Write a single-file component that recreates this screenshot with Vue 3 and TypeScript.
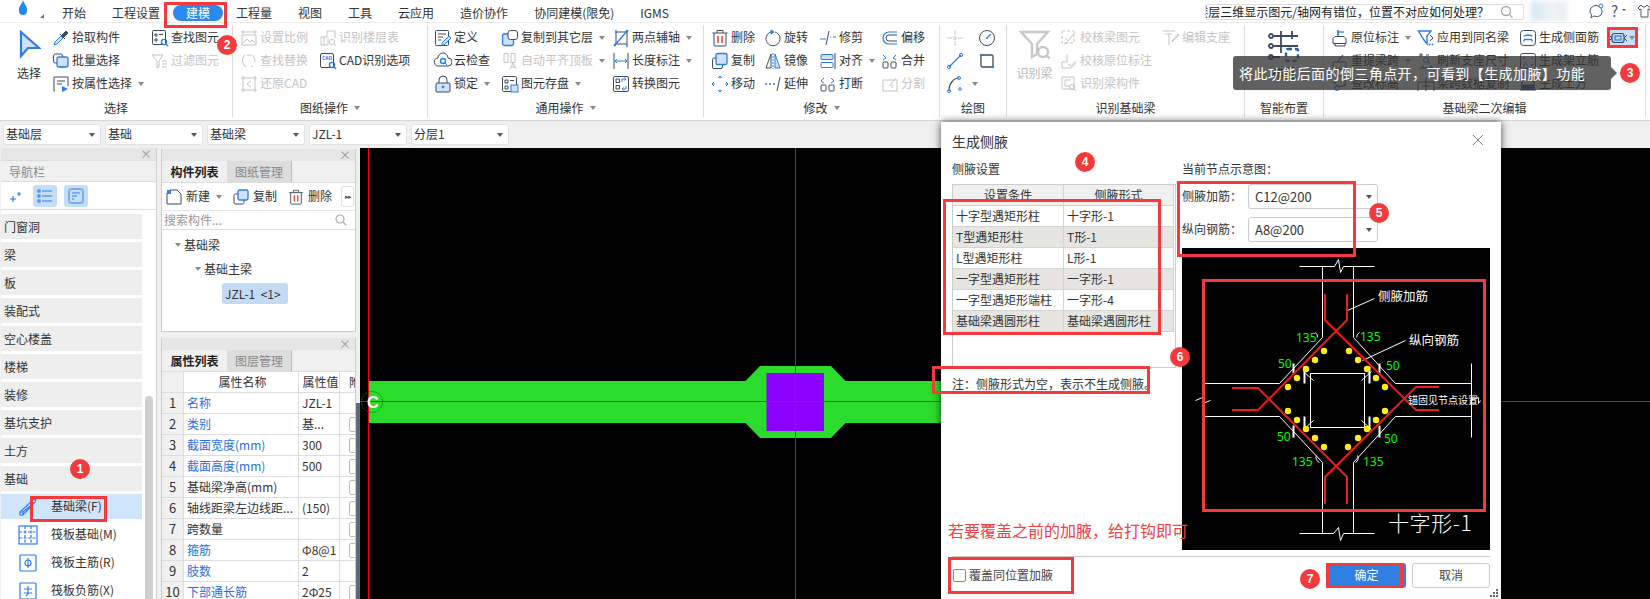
<script setup lang="ts">
const B = '#2b7de9'
const L = '#cfe2fb'
const mag = `<circle cx="13" cy="13" r="2.6" stroke="${B}" stroke-width="1.4"/><path d="M15 15l2 2" stroke="${B}" stroke-width="1.4"/>`
const icons: Record<string, string> = {
  pick: `<path d="M2 16l1-3 6-6 2 2-6 6z" fill="${L}" stroke="${B}"/><path d="M8 5l5 5M10 6l4-4 2 2-4 4z" fill="#3d4a5c"/>`,
  batch: `<rect x="1.5" y="2" width="9" height="9" rx="2"/><rect x="5" y="5" width="11" height="10" rx="2" fill="${L}" stroke="${B}" stroke-width="1.3"/><path d="M8 14l2 2 2-2" stroke="${B}"/>`,
  attr: `<path d="M3 16H2V2h14v9"/><path d="M5 6h8M5 9h5" /><path d="M10 11l6 3-6 3z" fill="${B}" stroke="none"/>`,
  find: `<rect x="1.5" y="1.5" width="13" height="14" rx="1"/><path d="M4 5h2v2H4zM8 5.5h4M4 10h2v2H4z"/>${mag}`,
  filter: `<path d="M1 3h11L8 9v6l-2 1V9z"/><path d="M11 9h5M11 12h5M11 15h5"/>`,
  scale: `<path d="M3 1v4M1 3h16M15 1v4M2 6h14v10H2z"/><path d="M3 14l4-4 3 3 2-2 3 3"/>`,
  replace: `<path d="M5 3a7 7 0 0 0-1 10l2 2"/><path d="M12 3a7 7 0 0 1 3 7"/><path d="M7 3h4M11 15l2-1"/>`,
  cadback: `<path d="M3 1v16M15 1v16M1 3h16M1 15h16"/><path d="M11 6L7 9l4 3" />`,
  floor: `<path d="M2 8h6V2h8v7M2 8v8h7V9M5 8v8"/><circle cx="13" cy="13" r="2.6"/><path d="M15 15l2 2"/>`,
  cad: `<rect x="1.5" y="1.5" width="13" height="14" rx="1.5"/><text x="3" y="8" font-size="5" font-weight="700" fill="${B}" stroke="none">CAD</text>${mag}`,
  define: `<rect x="1.5" y="1.5" width="13" height="15" rx="1"/><path d="M4 5h8M4 8h5M4 11h3"/><path d="M8 14l7-7 2 2-7 7H8z" fill="${L}" stroke="${B}"/>`,
  cloud: `<path d="M5 14a4 4 0 0 1-1-8 5 5 0 0 1 10 0 4 4 0 0 1 0 8z"/><circle cx="9" cy="9" r="2.5" stroke="${B}" stroke-width="1.4"/><path d="M11 11l2 2" stroke="${B}"/>`,
  lock: `<rect x="2" y="8" width="14" height="9" rx="1" fill="${L}"/><path d="M5 8V5a4 4 0 0 1 8 0v3"/><circle cx="9" cy="12" r="1" fill="${B}" stroke="${B}"/>`,
  copyto: `<rect x="1.5" y="5" width="11" height="11.5" rx="2" fill="${L}" stroke="${B}" stroke-width="1.3"/><rect x="7" y="1.5" width="9.5" height="9" rx="2.5" fill="#fff"/>`,
  align: `<path d="M3 1.5v9h4v-9zM10 1.5v9h4v-9z"/><path d="M9 17l3-6 3 6M10 15h4"/>`,
  save: `<rect x="1.5" y="1.5" width="14" height="15" rx="1"/><path d="M4 5h3v3H4zM9 5.5h4M4 11h3v3H4z"/><rect x="10" y="10" width="7" height="7" fill="${L}" stroke="${B}"/>`,
  axis: `<path d="M4 3h11v12H4z" /><path d="M2 17L16 1M4 1v3M15 15v3" stroke="${B}" stroke-width="1.4"/><circle cx="3" cy="16" r="1.2" fill="${B}" stroke="none"/><circle cx="15" cy="2" r="1.2" fill="${B}" stroke="none"/>`,
  dim: `<path d="M2 1v16M16 1v16"/><path d="M3 9h12M5 7L3 9l2 2M13 7l2 2-2 2" stroke="${B}"/>`,
  conv: `<rect x="1.5" y="1.5" width="15" height="15" rx="1.5"/><path d="M4 4h3.5v3.5H4zM4 10.5h3.5V14H4z"/><path d="M10 7V4h4M12.5 2.5L14 4l-1.5 1.5M14 11v3h-4M11.5 12.5L10 14l1.5 1.5" stroke="${B}"/>`,
  del: `<path d="M3 4v12a1 1 0 0 0 1 1h10a1 1 0 0 0 1-1V4M1.5 4h15M6 4V1.5h6V4"/><path d="M7 7v7M11 7v7" stroke="#e02020" stroke-width="1.3"/>`,
  rotate: `<path d="M7 3a7 7 0 1 0 4 0"/><path d="M7 1l3 2-3 2z" fill="${B}" stroke="${B}"/>`,
  trim: `<path d="M1 10h6M11 8h1M14 8h3" stroke="${B}"/><path d="M10 2L7 16"/>`,
  offset: `<path d="M16 3H8a6 6 0 0 0 0 12h8" stroke="${B}" stroke-width="1.2"/><path d="M16 6H8a3 3 0 0 0 0 6h8"/>`,
  copy: `<rect x="1.5" y="6" width="10" height="10.5" rx="1.5"/><rect x="5" y="1.5" width="11" height="11" rx="1.5" fill="${L}" stroke="${B}" stroke-width="1.3"/>`,
  mirror: `<path d="M7 2L2 16h5z"/><path d="M11 2l5 14h-5z" fill="${L}" stroke="${B}"/><path d="M9 1v16" stroke="${B}" stroke-dasharray="2 1"/>`,
  alignr: `<path d="M16 1v16" stroke="#3d4a5c"/><rect x="2" y="2.5" width="12" height="5" rx="1" stroke="${B}" fill="${L}"/><rect x="2" y="10.5" width="12" height="5" rx="1" stroke="${B}"/>`,
  merge: `<rect x="2" y="10" width="5" height="6" rx="1"/><rect x="10" y="10" width="5" height="6" rx="1"/><path d="M2 3l3 3-3 2M15 3l-3 3 3 2" stroke="${B}"/>`,
  move: `<path d="M9 1v16M1 9h16" stroke="${B}" stroke-dasharray="2.5 2"/><path d="M7 3l2-2 2 2M7 15l2 2 2-2M3 7L1 9l2 2M15 7l2 2-2 2" stroke="${B}"/><rect x="6" y="6" width="6" height="6" fill="#fff" stroke="#fff"/>`,
  extend: `<path d="M1 9h2M5 9h2M9 9h2" stroke="${B}" stroke-width="1.3"/><path d="M16 2l-3 14" />`,
  breakk: `<rect x="2" y="10" width="5" height="6" rx="1"/><rect x="10" y="10" width="5" height="6" rx="1"/><path d="M5 3L2 6l3 2M12 3l3 3-3 2" stroke="${B}"/>`,
  split: `<rect x="2" y="5" width="14" height="11"/><path d="M8 11l7-8M11 9v4"/>`,
  point: `<path d="M9 1v5M9 12v5M1 9h5M12 9h5"/><circle cx="9" cy="9" r="1.4"/>`,
  arc: `<circle cx="9" cy="9" r="7.5"/><path d="M9 9l4-4" stroke="${B}" stroke-width="1.3"/><circle cx="9" cy="9" r="1" fill="${B}" stroke="none"/>`,
  line: `<path d="M3 15L15 3" stroke="${B}" stroke-width="1.2"/><circle cx="3" cy="15" r="1.6" stroke="${B}"/><circle cx="15" cy="3" r="1.6" stroke="${B}"/>`,
  rect: `<rect x="3" y="3" width="12" height="12" rx="1.5" stroke-width="1.3"/><circle cx="3" cy="3" r="1.2" fill="${B}" stroke="none"/><circle cx="15" cy="15" r="1.2" fill="${B}" stroke="none"/>`,
  curve: `<path d="M3 16C3 8 8 3 13 3" stroke-width="1.2"/><circle cx="3" cy="16" r="1.5" stroke="${B}"/><circle cx="13" cy="3" r="1.5" stroke="${B}"/><circle cx="14" cy="14" r="1.3" stroke="${B}"/>`,
  chk: `<path d="M2 2h12v12H2z" stroke-dasharray="3 2"/><path d="M5 9l3 3 7-9"/><path d="M4 15l4-2"/>`,
  chk2: `<path d="M7 2v8H2v6h9l5-5"/><path d="M8 12l3 2 5-5"/>`,
  rec: `<path d="M2 2h12v12H2z"/><path d="M5 5h6M5 5v6h5"/><circle cx="12" cy="12" r="2.5"/><path d="M14 14l2 2"/>`,
  seat: `<path d="M1 2h12M3 5h7M7 5v11M10 12l6-7 1 1-7 7z"/>`,
  inplace: `<path d="M2 9.5l2-2h9l2 2v5H2zM4 14.5V17h10v-2.5M7 7.5V1"/><path d="M7 3h6" stroke="${B}" stroke-width="1.3"/><path d="M7 1v5" stroke="${B}" stroke-width="1.3"/>`,
  same: `<path d="M1.5 2H14l-4 5v8l-3-4z" stroke="${B}" stroke-width="1.4"/><path d="M13 6l3 3-3 3"/><circle cx="12.5" cy="15.5" r="1" fill="${B}" stroke="none"/><circle cx="15.5" cy="15.5" r="1" fill="${B}" stroke="none"/>`,
  side: `<rect x="1.5" y="1.5" width="15" height="15" rx="3"/><path d="M5 7.5c0-2 8-2 8 0M5 10.5h8M5 10.5v2M13 10.5v2" stroke="${B}" stroke-width="1.3"/>`,
  span: `<path d="M2 10h13v7H2z"/><path d="M6 10l6-7" stroke="${B}" stroke-width="1.4"/>`,
  refresh: `<path d="M2 3h4M4 1v4M9 3h3M10 9l3 3"/><circle cx="9" cy="8" r="2.5" stroke="${B}"/><path d="M3 16h14M6 13v3M14 13v3"/>`,
  frame: `<rect x="1.5" y="1.5" width="15" height="15" rx="2"/><circle cx="5" cy="6" r="1" fill="${B}" stroke="none"/><circle cx="13" cy="6" r="1" fill="${B}" stroke="none"/><circle cx="5" cy="13" r="1" fill="${B}" stroke="none"/><circle cx="13" cy="13" r="1" fill="${B}" stroke="none"/><path d="M5 10l4 4" stroke="${B}"/>`,
  elev: `<path d="M5 1h9v10H5M2 8h3"/><circle cx="6" cy="13" r="2.5" stroke="${B}"/>`,
  spancopy: `<path d="M1 16V7h16v9M9 3v13M5 11h8"/>`,
  earth: `<path d="M3 4v10h12V4M1 15h16" stroke-width="1.2"/><path d="M3 10h12v4H3z" fill="#2c62a8" stroke="#2c62a8"/>`,
  haunch: `<path d="M0 6l3 3-3 3M18 6l-3 3 3 3" stroke="#3d4a5c"/><rect x="3" y="4.5" width="12" height="9" rx="2.5" stroke="#3d4a5c" stroke-width="1.2"/><rect x="6" y="7" width="6" height="4" stroke="${B}" stroke-width="1.2"/>`,
}

interface Item { t: string; i: string; d?: boolean; c?: boolean; hl?: boolean }
interface Col { w: number; items: Item[] }
interface Group { label: string; w: number; pad: number; caret?: boolean; big?: { t: string; w: number; k: string; d?: boolean }; cols: Col[] }

const groups: Group[] = [
  { label: '选择', w: 233, pad: 5, big: { t: '选择', w: 48, k: 'select' }, cols: [
    { w: 99, items: [{ t: '拾取构件', i: 'pick' }, { t: '批量选择', i: 'batch' }, { t: '按属性选择', i: 'attr', c: true }] },
    { w: 80, items: [{ t: '查找图元', i: 'find' }, { t: '过滤图元', i: 'filter', d: true }] },
  ] },
  { label: '图纸操作', w: 195, pad: 8, caret: true, cols: [
    { w: 79, items: [{ t: '设置比例', i: 'scale', d: true }, { t: '查找替换', i: 'replace', d: true }, { t: '还原CAD', i: 'cadback', d: true }] },
    { w: 105, items: [{ t: '识别楼层表', i: 'floor', d: true }, { t: 'CAD识别选项', i: 'cad' }] },
  ] },
  { label: '通用操作', w: 276, pad: 7, caret: true, cols: [
    { w: 67, items: [{ t: '定义', i: 'define' }, { t: '云检查', i: 'cloud' }, { t: '锁定', i: 'lock', c: true }] },
    { w: 111, items: [{ t: '复制到其它层', i: 'copyto', c: true }, { t: '自动平齐顶板', i: 'align', d: true, c: true }, { t: '图元存盘', i: 'save', c: true }] },
    { w: 88, items: [{ t: '两点辅轴', i: 'axis', c: true }, { t: '长度标注', i: 'dim', c: true }, { t: '转换图元', i: 'conv' }] },
  ] },
  { label: '修改', w: 236, pad: 8, caret: true, cols: [
    { w: 53, items: [{ t: '删除', i: 'del' }, { t: '复制', i: 'copy' }, { t: '移动', i: 'move' }] },
    { w: 55, items: [{ t: '旋转', i: 'rotate' }, { t: '镜像', i: 'mirror' }, { t: '延伸', i: 'extend' }] },
    { w: 62, items: [{ t: '修剪', i: 'trim' }, { t: '对齐', i: 'alignr', c: true }, { t: '打断', i: 'breakk' }] },
    { w: 50, items: [{ t: '偏移', i: 'offset' }, { t: '合并', i: 'merge' }, { t: '分割', i: 'split', d: true }] },
  ] },
  { label: '绘图', w: 67, pad: 7, cols: [
    { w: 32, items: [{ t: '', i: 'point', d: true }, { t: '', i: 'line' }, { t: '', i: 'curve', c: true }] },
    { w: 20, items: [{ t: '', i: 'arc' }, { t: '', i: 'rect' }] },
  ] },
  { label: '识别基础梁', w: 238, pad: 1, big: { t: '识别梁', w: 53, k: 'recog', d: true }, cols: [
    { w: 102, items: [{ t: '校核梁图元', i: 'chk', d: true }, { t: '校核原位标注', i: 'chk2', d: true }, { t: '识别梁构件', i: 'rec', d: true }] },
    { w: 76, items: [{ t: '编辑支座', i: 'seat', d: true }] },
  ] },
  { label: '智能布置', w: 79, pad: 12, big: { t: '布置', w: 54, k: 'smart' }, cols: [] },
  { label: '基础梁二次编辑', w: 322, pad: 8, cols: [
    { w: 86, items: [{ t: '原位标注', i: 'inplace', c: true }, { t: '重提梁跨', i: 'span', c: true }, { t: '查改标高', i: 'elev' }] },
    { w: 102, items: [{ t: '应用到同名梁', i: 'same' }, { t: '刷新支座尺寸', i: 'refresh' }, { t: '梁跨数据复制', i: 'spancopy' }] },
    { w: 90, items: [{ t: '生成侧面筋', i: 'side' }, { t: '生成架立筋', i: 'frame' }, { t: '生成土方', i: 'earth' }] },
    { w: 26, items: [{ t: '', i: 'haunch', c: true, hl: true }] },
  ] },
]

const menus = ['开始', '工程设置', '建模', '工程量', '视图', '工具', '云应用', '造价协作', '协同建模(限免)', 'IGMS']
const combos = ['基础层', '基础', '基础梁', 'JZL-1', '分层1']
const navItems = ['门窗洞', '梁', '板', '装配式', '空心楼盖', '楼梯', '装修', '基坑支护', '土方', '基础']
const navSubs = [
  { t: '基础梁(F)', k: 'beam', on: true },
  { t: '筏板基础(M)', k: 'raft' },
  { t: '筏板主筋(R)', k: 'main' },
  { t: '筏板负筋(X)', k: 'neg' },
]
const props = [
  ['名称', 'JZL-1', 1, 0], ['类别', '基...', 1, 1], ['截面宽度(mm)', '300', 1, 1], ['截面高度(mm)', '500', 1, 1],
  ['基础梁净高(mm)', '', 0, 1], ['轴线距梁左边线距...', '(150)', 0, 1], ['跨数量', '', 0, 1], ['箍筋', 'Φ8@1', 1, 1],
  ['肢数', '2', 1, 0], ['下部通长筋', '2Φ25', 1, 1],
] as [string, string, number, number][]
const haunch = [
  ['十字型遇矩形柱', '十字形-1'], ['T型遇矩形柱', 'T形-1'], ['L型遇矩形柱', 'L形-1'],
  ['一字型遇矩形柱', '一字形-1'], ['一字型遇矩形端柱', '一字形-4'], ['基础梁遇圆形柱', '基础梁遇圆形柱'],
]
const redBoxes = [
  [164, 2, 63, 26], [1607, 27, 31, 21], [30, 496, 77, 26], [943, 199, 218, 136], [932, 366, 218, 28],
  [1177, 181, 179, 76], [1202, 279, 284, 233], [948, 557, 126, 37], [1326, 563, 77, 25],
]
const badges = [
  [80, 469, '1'], [227, 45, '2'], [1630, 73, '3'], [1085, 162, '4'], [1379, 213, '5'], [1180, 357, '6'], [1310, 579, '7'],
]
const dots = [
  [1324, 351], [1315, 360], [1306, 369], [1297, 378], [1349, 351], [1358, 360], [1367, 369], [1376, 378],
  [1288, 387], [1385, 387], [1288, 411], [1297, 420], [1306, 429], [1315, 438], [1324, 447],
  [1348, 447], [1358, 438], [1367, 429], [1376, 420], [1385, 411],
]
const greens = [
  [1296, 342, '135'], [1360, 341, '135'], [1278, 368, '50'], [1386, 370, '50'],
  [1277, 441, '50'], [1384, 443, '50'], [1292, 466, '135'], [1363, 466, '135'],
]
const boxStyle = (b: number[]) => ({ left: b[0] + 'px', top: b[1] + 'px', width: b[2] + 'px', height: b[3] + 'px' })
const badgeStyle = (b: (number | string)[]) => ({ left: Number(b[0]) - 10 + 'px', top: Number(b[1]) - 10 + 'px' })
const px = (n: number) => ({ width: n + 'px' })
</script>

<template>
  <div class="app">
    <header class="menubar">
      <svg class="logo" width="12" height="15" viewBox="0 0 12 15"><path d="M6 0c1 4 5 7 4 11a4 4 0 0 1-8 0C1 7 5 4 6 0z" fill="#1f8df0" /></svg>
      <i class="logo-tri"></i>
      <span v-for="m in menus" :key="m" class="menu" :class="{ on: m === '建模' }"><b>{{ m }}</b></span>
      <div class="search"><span class="search-text">楼层三维显示图元/轴网有错位&#xFF0C;位置不对应如何处理&#xFF1F;</span>
        <svg width="14" height="14" viewBox="0 0 14 14" fill="none" stroke="#aaa" stroke-width="1.3"><circle cx="6" cy="6" r="4.5" /><path d="M9.5 9.5l3 3" /></svg>
      </div>
      <div class="avatar"></div>
      <svg class="top-ic chat" width="17" height="17" viewBox="0 0 17 17" fill="none" stroke="#4a5a70"><path d="M2 8a6 6 0 0 1 10-4 6 6 0 0 1 1 8 6 6 0 0 1-7 1l-3 2 .5-3A6 6 0 0 1 2 8z" /><circle cx="13" cy="3" r="2" fill="#fff" stroke="#2b7de9" /></svg>
      <span class="qm">?</span><i class="qm-caret"></i>
      <svg class="top-ic shirt" width="14" height="16" viewBox="0 0 14 16" fill="none" stroke="#4a5a70"><path d="M4 2L1 5l2 2 1-1v8h7V6l2 1V5l-3-3-2 2H6z" /></svg>
    </header>

    <section class="ribbon">
      <div v-for="g in groups" :key="g.label" class="group" :style="px(g.w)">
        <div class="group-body">
          <div class="group-pad" :style="px(g.pad)"></div>
          <div v-if="g.big" class="big" :class="{ off: g.big.d }" :style="px(g.big.w)">
            <svg v-if="g.big.k === 'select'" width="24" height="30" viewBox="0 0 24 30"><path d="M4 2l18 16H11L4 26z" fill="#cfe2fb" stroke="#2b7de9" stroke-width="2.2" /></svg>
            <svg v-else-if="g.big.k === 'recog'" width="32" height="30" viewBox="0 0 32 30" fill="none" stroke="#c8c8c8" stroke-width="2.4"><path d="M2 2h27L18 14v10l-5 3V14zM2 2" /><circle cx="24" cy="22" r="5" /><path d="M27.5 25.5l3 3" /></svg>
            <svg v-else width="32" height="32" viewBox="0 0 32 32" fill="none" stroke="#3d4a5c" stroke-width="1.8"><path d="M6 6h24M6 16h24M6 27h6M13 1v22M24 1v8" /><circle cx="3" cy="6" r="2" /><circle cx="3" cy="16" r="2" /><circle cx="3" cy="27" r="2" /><rect x="18" y="19" width="12" height="12" rx="2" stroke="#1d5fb0" stroke-width="2.4" stroke-dasharray="4 3" /></svg>
            <span>{{ g.big.t }}</span>
          </div>
          <div v-for="(c, ci) in g.cols" :key="ci" class="col" :style="px(c.w)">
            <div v-for="it in c.items" :key="it.i" class="item" :class="{ off: it.d, hl: it.hl }">
              <svg width="18" height="18" viewBox="0 0 18 18" fill="none" stroke="currentColor" v-html="icons[it.i]"></svg>
              <span v-if="it.t">{{ it.t }}</span>
              <i v-if="it.c" class="caret"></i>
            </div>
          </div>
        </div>
        <div class="group-label">{{ g.label }}<i v-if="g.caret" class="caret lab"></i></div>
      </div>
    </section>

    <section class="combobar">
      <div v-for="c in combos" :key="c" class="combo"><span>{{ c }}</span><i class="caret dark"></i></div>
    </section>

    <main class="work">
      <aside class="nav">
        <div class="closebar">×</div>
        <div class="nav-title">导航栏</div>
        <div class="nav-tools">
          <svg width="14" height="14" viewBox="0 0 14 14" fill="none" stroke="#2b7de9" stroke-width="1.2"><path d="M4 7v6M1 10h6M10 3v4M8 5h4" /></svg>
          <span class="tool-on"><svg width="16" height="14" viewBox="0 0 16 14" fill="none" stroke="#2b7de9"><path d="M5 2h10M5 7h10M5 12h10" /><rect x="1" y="1" width="2" height="2" /><rect x="1" y="6" width="2" height="2" /><rect x="1" y="11" width="2" height="2" /></svg></span>
          <span class="tool-on"><svg width="16" height="16" viewBox="0 0 16 16" fill="none" stroke="#2b7de9"><rect x="1" y="1" width="14" height="14" rx="1.5" /><path d="M4 5h8M4 8h5M4 11h2" /></svg></span>
        </div>
        <div class="nav-list">
          <div class="nav-scroll"></div>
          <div v-for="n in navItems" :key="n" class="nav-item">{{ n }}</div>
          <div v-for="s in navSubs" :key="s.t" class="nav-sub" :class="{ on: s.on }">
            <svg width="20" height="20" viewBox="0 0 20 20" fill="none" stroke="#2b7de9" stroke-width="1.2">
              <template v-if="s.k === 'beam'"><path d="M2 15L15 3l3-1-1 3L5 18H2zM2 15h3v3M5 15L17 5" /></template>
              <template v-else-if="s.k === 'raft'"><rect x="1" y="1" width="18" height="18" /><path d="M1 7h18M1 13h18M7 1v18M13 1v18" stroke-dasharray="3 1.5" /></template>
              <template v-else-if="s.k === 'main'"><rect x="2" y="2" width="16" height="16" rx="1" /><path d="M7 10a3 3 0 0 1 6 0 3 3 0 0 1-6 0zM10 5v10" /></template>
              <template v-else><rect x="2" y="2" width="16" height="16" rx="1" /><path d="M6 8h8M6 12h8M10 5v8l-2 2" /></template>
            </svg>
            <span>{{ s.t }}</span>
          </div>
        </div>
      </aside>

      <div class="midcol">
        <section class="panel list-panel">
          <div class="closebar">×</div>
          <div class="tabs"><span class="tab active">构件列表</span><span class="tab">图纸管理</span></div>
          <div class="toolbar">
            <svg width="16" height="16" viewBox="0 0 16 16" fill="none" stroke="#3d4a5c"><path d="M4 1h7l4 4v10H1V4" /><rect x="1" y="1" width="4" height="4" fill="#2b7de9" stroke="none" /></svg><span class="tb-t">新建</span><i class="caret t-caret"></i>
            <svg class="tb-ic" width="16" height="16" viewBox="0 0 16 16" fill="none"><rect x="1" y="5" width="10" height="10" rx="1.5" stroke="#3d4a5c" /><rect x="5" y="1" width="10" height="10" rx="1.5" fill="#cfe2fb" stroke="#2b7de9" stroke-width="1.3" /></svg><span class="tb-t">复制</span>
            <svg class="tb-ic" width="16" height="16" viewBox="0 0 18 18" fill="none" stroke="#3d4a5c" v-html="icons.del"></svg><span class="tb-t">删除</span>
            <span class="more">▸▸</span>
          </div>
          <div class="searchrow"><span>搜索构件...</span><svg width="12" height="12" viewBox="0 0 12 12" fill="none" stroke="#aaa" stroke-width="1.2"><circle cx="5" cy="5" r="4" /><path d="M8 8l3 3" /></svg></div>
          <div class="tree">
            <div class="node l1"><i class="caret tree-c"></i>基础梁</div>
            <div class="node l2"><i class="caret tree-c"></i>基础主梁</div>
            <div class="node l3"><span class="chip">JZL-1 &nbsp;&lt;1&gt;</span></div>
          </div>
        </section>
        <section class="panel prop-panel">
          <div class="closebar">×</div>
          <div class="tabs"><span class="tab active">属性列表</span><span class="tab">图层管理</span></div>
          <div class="prow phead"><span class="pidx"></span><span class="pname center">属性名称</span><span class="pval center">属性值</span><span class="pext">附</span></div>
          <div v-for="(p, i) in props" :key="i" class="prow">
            <span class="pidx">{{ i + 1 }}</span>
            <span class="pname" :class="{ blue: p[2] }">{{ p[0] }}</span>
            <span class="pval">{{ p[1] }}</span>
            <span class="pext"><i v-if="p[3]" class="cbx"></i></span>
          </div>
        </section>
        <div class="splitter"></div>
      </div>

      <div class="canvas">
        <svg width="1290" height="451" viewBox="360 148 1290 451">
          <rect x="360" y="148" width="1290" height="451" fill="#000" />
          <path d="M368 381H745.5L760 366H831L845.5 381H960V423H845.5L831 438H760L745.5 423H368z" fill="#2cdc2c" />
          <rect x="766.5" y="373" width="57.5" height="58" fill="#8c00ff" />
          <path d="M368.5 148V599M795.5 148V599M360 401.5H1650" stroke="#f00818" stroke-width="1" />
          <circle cx="372" cy="402" r="10.5" fill="none" stroke="#0a7a0a" stroke-dasharray="1.5 1" />
          <text x="367" y="408" class="axis-c">C</text>
        </svg>
      </div>
    </main>

    <div class="dialog">
      <div class="dlg-title">生成侧腋<svg class="dlg-x" width="12" height="12" viewBox="0 0 12 12" stroke="#888" stroke-width="1"><path d="M1 1l10 10M11 1L1 11" /></svg></div>
      <div class="dlg-body">
        <div class="dlg-left">
          <div class="lbl">侧腋设置</div>
          <div class="htable">
            <div class="hrow hhead"><span>设置条件</span><span>侧腋形式</span></div>
            <div v-for="(r, i) in haunch" :key="i" class="hrow" :class="{ alt: i % 2 }"><span>{{ r[0] }}</span><span>{{ r[1] }}</span></div>
          </div>
          <div class="note">注&#xFF1A;侧腋形式为空&#xFF0C;表示不生成侧腋。</div>
        </div>
        <div class="dlg-right">
          <div class="lbl">当前节点示意图&#xFF1A;</div>
          <div class="field"><label>侧腋加筋&#xFF1A;</label><div class="sel"><span>C12@200</span><i class="caret dark"></i></div></div>
          <div class="field second"><label>纵向钢筋&#xFF1A;</label><div class="sel"><span>A8@200</span><i class="caret dark"></i></div></div>
          <svg class="diagram" width="308" height="302" viewBox="1182 248 308 302" fill="none">
            <rect x="1182" y="248" width="308" height="302" fill="#000" />
            <g stroke="#fff" stroke-width="1" transform="translate(.5 .5)">
              <path d="M1299 266H1334L1338 259L1340 272L1343 266H1374M1322 266V337L1279 383H1204M1353 266V337L1395 383H1471M1204 416H1279L1322 462V533M1471 416H1395L1353 462V533M1299 533H1333L1338 527L1340 540L1343 533H1374M1471 363V437" />
              <rect x="1310" y="373" width="54" height="54" />
              <path d="M1347 310L1374 298M1362 360L1405 340" />
              <path d="M1195 400L1202 397V403L1210 400M1470 400L1478 397V403L1480 400" />
              <path d="M1303 371L1313 380M1371 371L1361 380M1303 429L1313 420M1371 429L1361 420" />
              <path d="M1293 363V373M1304 366V383M1369 366V383M1379 363V373M1293 425V437M1304 416V430M1369 416V430M1379 425V437" stroke-width="2" />
              <path d="M1317 337a6 6 0 0 0-2-5M1356 337a6 6 0 0 1 3-5M1316 455a5 5 0 0 0 3 7M1357 455a5 5 0 0 1-2 7" />
            </g>
            <g stroke="#f01818" stroke-width="2">
              <path d="M1325 294V320L1416 410H1439M1347 294V320L1258 410H1232M1232 388H1258L1347 477V504M1439 387H1416L1325 477V504" />
            </g>
            <circle v-for="(d, i) in dots" :key="i" :cx="d[0]" :cy="d[1]" r="3.2" fill="#ffee10" />
            <text v-for="(g, i) in greens" :key="'g' + i" :x="g[0]" :y="g[1]" class="dg-green">{{ g[2] }}</text>
            <text x="1378" y="301" class="dg-white">侧腋加筋</text>
            <text x="1409" y="345" class="dg-white">纵向钢筋</text>
            <text x="1408" y="404" class="dg-small">锚固见节点设置</text>
            <text x="1388" y="531" class="dg-big">十字形-1</text>
          </svg>
        </div>
      </div>
      <footer class="dlg-foot">
        <label class="check"><i class="cb"></i>覆盖同位置加腋</label>
        <div class="btns"><button class="ok">确定</button><button class="cancel">取消</button></div>
        <svg class="grip" width="10" height="10" viewBox="0 0 10 10" fill="#666"><rect x="7" y="1" width="2" height="2" /><rect x="4" y="4" width="2" height="2" /><rect x="7" y="4" width="2" height="2" /><rect x="1" y="7" width="2" height="2" /><rect x="4" y="7" width="2" height="2" /><rect x="7" y="7" width="2" height="2" /></svg>
      </footer>
    </div>

    <div class="tip">将此功能后面的倒三角点开&#xFF0C;可看到【生成加腋】功能</div>
    <div class="red-note">若要覆盖之前的加腋&#xFF0C;给打钩即可</div>
    <div v-for="(b, i) in redBoxes" :key="'r' + i" class="redbox" :style="boxStyle(b)"></div>
    <div v-for="b in badges" :key="String(b[2])" class="badge" :style="badgeStyle(b)">{{ b[2] }}</div>
  </div>
</template>

<style scoped>
.app { position: relative; width: 1650px; height: 599px; overflow: hidden; background: #f0f0f0; font: 12px/1.2 "Noto Sans CJK SC", "Liberation Sans", sans-serif; color: #333; display: flex; flex-direction: column; }
i { display: block; font-style: normal; }
.caret { width: 0; height: 0; border: 3px solid transparent; border-top: 4px solid #8a8a8a; border-bottom: 0; margin-left: 6px; flex: none; }
.caret.dark { border-top-color: #555; }
.menubar { height: 23px; flex: none; background: #fff; display: flex; align-items: center; padding-left: 49px; position: relative; border-bottom: 1px solid #ececec; box-sizing: border-box; }
.logo { position: absolute; left: 17px; top: 0; }
.logo-tri { position: absolute; left: 40px; top: 14px; border: 2px solid transparent; border-right-color: #777; border-bottom-color: #777; }
.menu { padding: 0 13px; height: 16px; line-height: 16px; margin-top: 4px; flex: none; }
.menu b { font-weight: 400; }
.menu.on { background: #2a8af0; color: #fff; border-radius: 9px; }
.search { margin-left: auto; width: 319px; height: 16px; border: 1px solid #ddd; box-sizing: border-box; border-radius: 2px; display: flex; align-items: center; justify-content: flex-end; overflow: hidden; background: #fff; flex: none; margin-top: 2px; }
.search-text { white-space: nowrap; color: #222; flex: none; margin-right: 11px; line-height: 14px; }
.search svg { flex: none; margin-right: 9px; }
.avatar { width: 36px; height: 20px; margin-left: 7px; flex: none; background: linear-gradient(90deg, #d4e7f8, #eef3f6 60%, #e8ecee); filter: blur(2px); }
.top-ic { flex: none; }
.chat { margin-left: 21px; }
.qm { margin-left: 6px; font-size: 15px; color: #4a5a70; flex: none; width: 10px; }
.qm-caret { border: 2px solid transparent; border-top-color: #555; margin-left: 1px; flex: none; }
.shirt { margin-left: 11px; margin-right: -1px; }
.ribbon { height: 98px; flex: none; background: #fff; display: flex; border-bottom: 1px solid #d6d6d6; box-sizing: border-box; }
.group { height: 92px; margin-top: 2px; border-right: 1px solid #dcdcdc; box-sizing: border-box; display: flex; flex-direction: column; flex: none; }
.group-body { height: 73px; display: flex; padding-top: 1px; box-sizing: border-box; flex: none; }
.group-pad { flex: none; }
.group-label { text-align: center; height: 19px; line-height: 19px; display: flex; justify-content: center; align-items: center; flex: none; }
.caret.lab { margin-left: 6px; }
.big { display: flex; flex-direction: column; align-items: center; flex: none; padding-top: 4px; }
.big span { position: absolute; top: 66px; line-height: 14px; }
.big.off { color: #bbb; }
.col { flex: none; }
.item { height: 23px; display: flex; align-items: center; white-space: nowrap; color: #333; }
.item svg { flex: none; color: #3d4a5c; margin-left: -1px; margin-right: 2px; }
.item.off, .item.off svg { color: #c4c4c4; }
.item.hl { background: #c5def6; height: 16px; margin: 4px 0 0 -1px; width: 27px; }
.item.hl svg { margin-left: 0; margin-right: 0; }
.item.hl .caret { margin-left: 2px; }
.combobar { height: 27px; flex: none; display: flex; gap: 4px; padding: 3px 0 0 3px; box-sizing: border-box; }
.combo { width: 98px; height: 21px; background: #fff; border: 1px solid #e2e2e2; box-sizing: border-box; border-radius: 3px; display: flex; align-items: center; justify-content: space-between; padding: 0 5px 0 2px; }
.work { flex: 1; display: flex; min-height: 0; }
.closebar { height: 12px; line-height: 11px; background: #e6e6e6; text-align: right; padding-right: 4px; color: #999; font-size: 12px; box-sizing: border-box; }
.nav { width: 156px; margin-left: 1px; background: #fff; border-right: 1px solid #d0d0d0; box-sizing: border-box; flex: none; overflow: hidden; }
.nav-title { height: 22px; line-height: 22px; padding-left: 8px; background: #f0f0f0; color: #888; font-size: 12px; border-bottom: 1px solid #ddd; box-sizing: border-box; border-top: 1px solid #ddd; }
.nav-tools { height: 28px; display: flex; align-items: center; padding-left: 8px; gap: 7px; border-bottom: 1px solid #ddd; box-sizing: border-box; }
.tool-on { width: 24px; height: 22px; background: #c5def6; border-radius: 3px; display: flex; align-items: center; justify-content: center; }
.tool-on:first-of-type { margin-left: 3px; }
.nav-list { padding-top: 4px; position: relative; }
.nav-scroll { position: absolute; left: 144px; top: 186px; width: 8px; height: 260px; background: #d0d0d0; border-radius: 4px; }
.nav-item { width: 141px; height: 25px; line-height: 25px; margin-bottom: 3px; background: #eee; padding-left: 3px; box-sizing: border-box; }
.nav-sub { width: 141px; height: 25px; margin-bottom: 3px; display: flex; align-items: center; padding-left: 17px; box-sizing: border-box; }
.nav-sub span { margin-left: 13px; }
.nav-sub.on { background: #cfe5fb; }
.midcol { width: 203px; flex: none; padding: 1px 4px 0 4px; box-sizing: border-box; display: flex; flex-direction: column; gap: 6px; position: relative; }
.panel { width: 195px; background: #fff; border: 1px solid #ccc; border-top: 0; box-sizing: border-box; overflow: hidden; flex: none; }
.list-panel { height: 183px; }
.prop-panel { height: 262px; border-bottom: 0; }
.tabs { height: 22px; background: #f0f0f0; display: flex; padding-left: 0; border-bottom: 1px solid #ddd; box-sizing: border-box; }
.tab { width: 65px; height: 21px; line-height: 21px; text-align: center; background: #ddd; color: #888; font-size: 12px; border-right: 1px solid #bbb; box-sizing: border-box; }
.tab.active { background: #f0f0f0; color: #222; font-weight: 700; border-right: 0; }
.toolbar { height: 28px; display: flex; align-items: center; padding-left: 4px; border-bottom: 1px solid #e6e6e6; box-sizing: border-box; }
.tb-t { margin-left: 4px; }
.t-caret { margin-left: 6px; }
.tb-ic { margin-left: 11px; }
.more { margin-left: 9px; border: 1px solid #e0e0e0; border-radius: 3px; width: 11px; height: 19px; line-height: 19px; font-size: 7px; color: #555; text-align: center; overflow: hidden; letter-spacing: -1px; flex: none; }
.searchrow { height: 19px; display: flex; align-items: center; justify-content: space-between; padding: 0 8px 0 2px; color: #999; border-bottom: 1px solid #ddd; box-sizing: border-box; }
.tree { padding-top: 3px; }
.node { height: 24px; display: flex; align-items: center; }
.l1 { padding-left: 13px; }
.l2 { padding-left: 33px; }
.l3 { padding-left: 60px; }
.tree-c { margin: 0 3px 0 0; border-left-width: 3px; border-right-width: 3px; }
.chip { background: #c2daf2; border-radius: 3px; padding: 0 3px; width: 66px; box-sizing: border-box; height: 21px; line-height: 21px; white-space: nowrap; }
.prow { display: grid; grid-template-columns: 22px 115px 41px 17px; height: 21px; line-height: 20px; border-bottom: 1px solid #ddd; box-sizing: border-box; }
.phead { height: 21px; }
.prow > span { border-right: 1px solid #ddd; box-sizing: border-box; white-space: nowrap; overflow: hidden; padding-left: 3px; }
.pidx { background: #f0f0f0; font-size: 13px; text-align: center; padding-left: 0 !important; }
.prow .pext { border-right: 0; padding-left: 9px; }
.pname.center, .pval.center { text-align: center; }
.pval { padding-left: 4px; }
.blue { color: #2a6fd6; }
.cbx { width: 8px; height: 13px; border: 1px solid #bbb; border-radius: 2px; margin-top: 3px; }
.splitter { position: absolute; left: 199px; top: 255px; width: 4px; height: 197px; background: #5f6b78; }
.canvas { flex: 1; min-width: 0; overflow: hidden; }
.canvas svg { display: block; }
.axis-c { fill: #fff; font: 700 16px "Liberation Sans", sans-serif; }
.dialog { position: absolute; left: 941px; top: 122px; width: 560px; height: 477px; padding: 0 11px; background: #fff; box-sizing: border-box; box-shadow: 0 0 8px rgba(0, 0, 0, 0.7); display: flex; flex-direction: column; }
.dlg-title { height: 38px; line-height: 38px; font-size: 14px; flex: none; position: relative; }
.dlg-x { position: absolute; right: 6px; top: 12px; }
.dlg-body { display: flex; gap: 6px; height: 396px; flex: none; }
.dlg-left { width: 224px; flex: none; }
.dlg-right { width: 308px; flex: none; }
.lbl { height: 24px; line-height: 18px; }
.htable { height: 184px; border: 1px solid #ccc; box-sizing: border-box; padding-right: 1px; }
.hrow { display: grid; grid-template-columns: 111px 110px; height: 21px; line-height: 20px; border-bottom: 1px solid #d4d4d4; box-sizing: border-box; }
.hrow span { padding-left: 3px; border-right: 1px solid #d4d4d4; white-space: nowrap; overflow: hidden; }
.hhead { background: #f0f0f0; }
.hhead span { text-align: center; padding: 0; }
.alt { background: #e6e5e2; }
.note { margin-top: 7px; line-height: 18px; white-space: nowrap; }
.field { display: flex; height: 25px; align-items: center; }
.field.second { margin-top: 8px; }
.field label { width: 66px; flex: none; }
.sel { width: 130px; height: 25px; border: 1px solid #ccc; border-radius: 3px; display: flex; align-items: center; justify-content: space-between; padding: 0 5px 0 6px; box-sizing: border-box; font-size: 13px; }
.diagram { display: block; margin-top: 6px; }
.dg-green { fill: #00ff00; font: 12px "Noto Sans", sans-serif; }
.dg-white { fill: #fff; font: 12.5px "Noto Sans CJK SC", sans-serif; }
.dg-small { fill: #fff; font: 10px "Noto Sans CJK SC", sans-serif; }
.dg-big { fill: #fff; font: 300 21px "Noto Sans CJK SC", sans-serif; letter-spacing: 0.6px; }
.dlg-foot { height: 43px; flex: none; border-top: 1px solid #ccc; box-sizing: border-box; display: flex; align-items: flex-start; justify-content: space-between; position: relative; padding-top: 6px; }
.check { display: flex; align-items: center; margin-top: 4px; height: 16px; color: #444; }
.cb { width: 13px; height: 13px; border: 1px solid #888; border-radius: 2px; margin: 0 3px 0 1px; box-sizing: border-box; }
.btns { display: flex; gap: 6px; }
.btns button { font: inherit; height: 25px; width: 78px; border-radius: 3px; padding: 0; box-sizing: border-box; }
.ok { background: #2f80e0; color: #fff; border: 0; margin-right: 0; width: 79px !important; }
.cancel { background: #fff; color: #444; border: 1px solid #ccc; }
.grip { position: absolute; right: -9px; bottom: 1px; }
.tip { position: absolute; left: 1233px; top: 56px; width: 378px; height: 34px; line-height: 34px; background: rgba(52, 52, 52, 0.78); color: #fff; font-size: 14px; letter-spacing: 0.42px; padding-left: 6px; box-sizing: border-box; border-radius: 3px; white-space: nowrap; }
.tip::after { content: ""; position: absolute; left: 100%; top: 11px; border: 6px solid transparent; border-left-color: rgba(52, 52, 52, 0.78); border-right: 0; }
.red-note { position: absolute; left: 948px; top: 518px; color: #f04040; font-size: 16px; line-height: 24px; white-space: nowrap; }
.redbox { position: absolute; border: 3px solid #f43a3c; box-sizing: border-box; }
.badge { position: absolute; width: 20px; height: 20px; border-radius: 50%; background: #f43a3c; color: #fff; font: 700 12px/20px "Liberation Sans", sans-serif; text-align: center; }
</style>
